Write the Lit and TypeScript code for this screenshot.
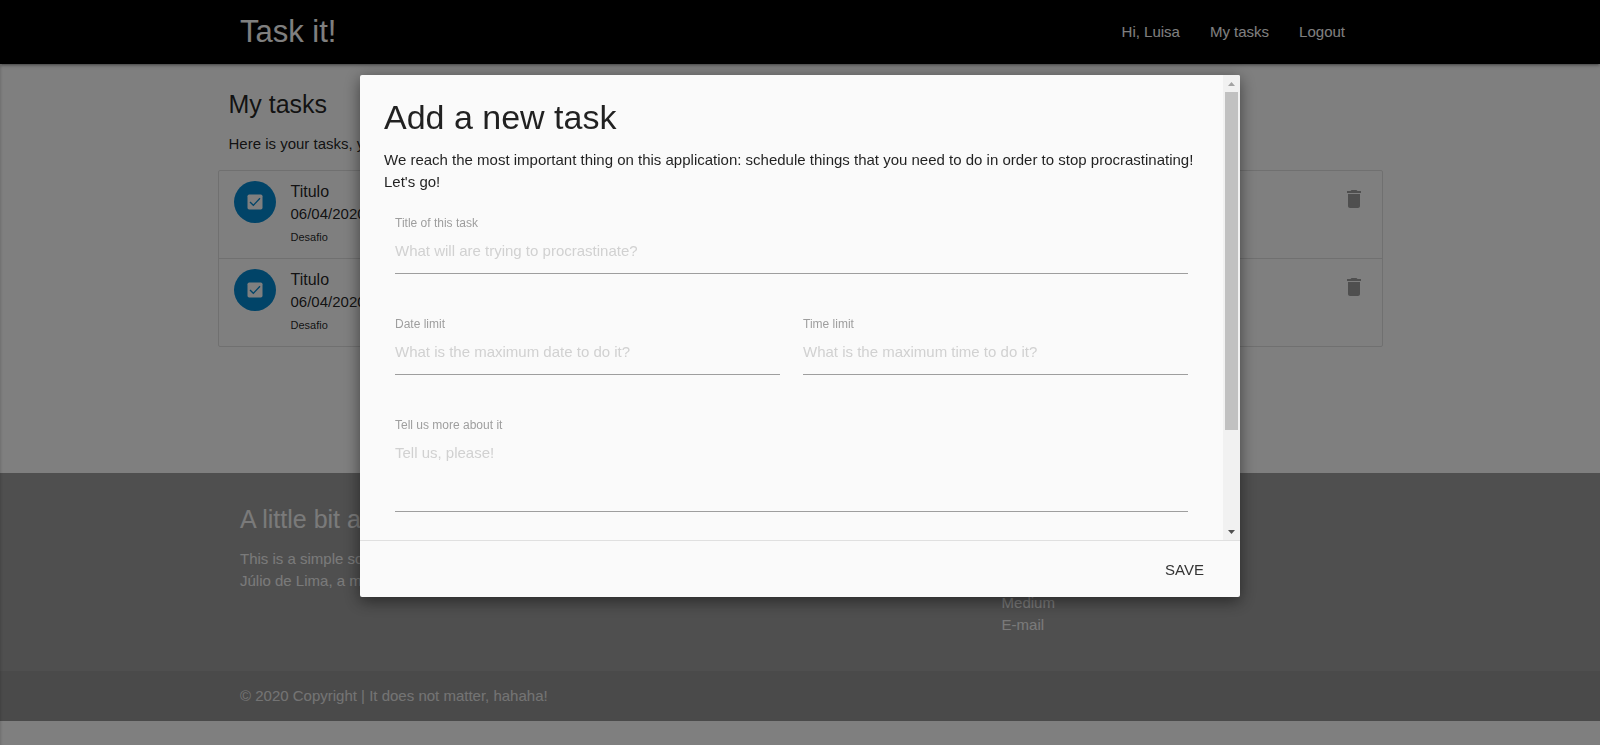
import { LitElement, html, css } from "lit";
import { customElement, property, state } from "lit/decorators.js";

interface Task {
  title: string;
  when: string;
  detail: string;
}

@customElement("task-item")
class TaskItem extends LitElement {
  @property({ attribute: false }) task!: Task;

  static styles = css`
    :host {
      display: flex;
      align-items: flex-start;
      box-sizing: border-box;
      padding: 10px 16px 9px 15px;
      border-bottom: 1px solid #e0e0e0;
    }
    .badge {
      display: flex;
      align-items: center;
      justify-content: center;
      flex: none;
      width: 42px;
      height: 42px;
      margin-right: 15px;
      border-radius: 50%;
      background: #0288d1;
    }
    .badge svg {
      width: 20px;
      height: 20px;
    }
    .text {
      flex: 1;
      line-height: 22px;
    }
    .title {
      font-size: 16px;
    }
    p {
      margin: 0;
    }
    .detail {
      font-size: 11px;
      line-height: 24px;
    }
    button {
      margin: 6px 0 0;
      padding: 0;
      border: 0;
      background: none;
      line-height: 0;
      cursor: pointer;
    }
    button svg {
      width: 24px;
      height: 24px;
      fill: #9e9e9e;
    }
  `;

  render() {
    return html`
      <span class="badge">
        <svg viewBox="0 0 24 24" aria-hidden="true">
          <rect x="3" y="3" width="18" height="18" rx="2" fill="#fff" />
          <path d="M6 12l4 4 8-8.500" fill="none" stroke="#0288d1" stroke-width="1.600" />
        </svg>
      </span>
      <div class="text">
        <div class="title">${this.task.title}</div>
        <p>${this.task.when}</p>
        <p class="detail">${this.task.detail}</p>
      </div>
      <button type="button" aria-label="Delete task">
        <svg viewBox="0 0 24 24" aria-hidden="true">
          <path d="M6 19c0 1.1.9 2 2 2h8c1.1 0 2-.9 2-2V7H6v12zM19 4h-3.5l-1-1h-5l-1 1H5v2h14V4z" />
        </svg>
      </button>
    `;
  }
}

@customElement("task-dialog")
class TaskDialog extends LitElement {
  static styles = css`
    :host {
      position: fixed;
      top: 10%;
      left: 0;
      right: 0;
      display: flex;
      flex-direction: column;
      width: 55%;
      height: calc(70% + 1px);
      margin: 0 auto;
      overflow: hidden;
      border-radius: 2px;
      background: #fafafa;
      box-shadow: 0 4px 16px rgba(0, 0, 0, 0.5);
    }
    .body {
      display: flex;
      flex: 1;
      min-height: 0;
    }
    .content {
      flex: 1;
      padding: 24px;
      overflow-y: auto;
      scrollbar-width: none;
    }
    h4 {
      margin: 0 0 14px;
      font-size: 34px;
      font-weight: 400;
      line-height: 36px;
    }
    p {
      margin: 0;
      line-height: 22px;
    }
    form {
      display: grid;
      grid-template-columns: 1fr 1fr;
      gap: 45px 23px;
      padding: 25px 11px 0;
    }
    .field {
      display: flex;
      flex-direction: column;
    }
    .wide {
      grid-column: 1 / -1;
    }
    label {
      color: #9e9e9e;
      font-size: 12px;
      line-height: 10px;
    }
    input,
    textarea {
      box-sizing: border-box;
      width: 100%;
      height: 46px;
      margin: 0;
      padding: 0;
      border: 0;
      border-bottom: 1px solid #9e9e9e;
      border-radius: 0;
      outline: none;
      background: transparent;
      font: 15px "Liberation Sans", Arial, sans-serif;
    }
    textarea {
      height: 82px;
      padding: 14px 0;
      resize: none;
      overflow: hidden;
    }
    ::placeholder {
      color: #d1d1d1;
      opacity: 1;
    }
    .scrollbar {
      display: flex;
      flex-direction: column;
      width: 17px;
      background: #f1f1f1;
    }
    .scrollbar svg {
      flex: none;
      width: 17px;
      height: 17px;
      fill: #505050;
    }
    .scrollbar .up {
      fill: #a3a3a3;
    }
    .track {
      display: grid;
      grid-template-rows: 29fr 8fr;
      flex: 1;
      padding: 0 2px;
    }
    .thumb {
      background: #c1c1c1;
    }
    footer {
      display: flex;
      align-items: center;
      justify-content: flex-end;
      box-sizing: border-box;
      height: 57px;
      padding: 0 20px;
      border-top: 1px solid rgba(0, 0, 0, 0.1);
    }
    footer button {
      height: 36px;
      padding: 0 16px;
      border: 0;
      background: transparent;
      color: #343434;
      font: 15px "Liberation Sans", Arial, sans-serif;
      text-transform: uppercase;
      cursor: pointer;
    }
  `;

  render() {
    return html`
      <div class="body">
        <div class="content">
          <h4>Add a new task</h4>
          <p>
            We reach the most important thing on this application: schedule things that you need to
            do in order to stop procrastinating! Let's go!
          </p>
          <form id="task-form">
            <div class="field wide">
              <label for="title">Title of this task</label>
              <input id="title" type="text" placeholder="What will are trying to procrastinate?" />
            </div>
            <div class="field">
              <label for="date">Date limit</label>
              <input id="date" type="text" placeholder="What is the maximum date to do it?" />
            </div>
            <div class="field">
              <label for="time">Time limit</label>
              <input id="time" type="text" placeholder="What is the maximum time to do it?" />
            </div>
            <div class="field wide">
              <label for="detail">Tell us more about it</label>
              <textarea id="detail" placeholder="Tell us, please!"></textarea>
            </div>
          </form>
        </div>
        <div class="scrollbar" aria-hidden="true">
          <svg class="up" viewBox="0 0 17 17"><path d="M5 11h7L8.500 7z" /></svg>
          <div class="track"><div class="thumb"></div></div>
          <svg viewBox="0 0 17 17"><path d="M5 7h7L8.500 11z" /></svg>
        </div>
      </div>
      <footer><button type="submit" form="task-form">Save</button></footer>
    `;
  }
}

@customElement("app-root")
class AppRoot extends LitElement {
  @state() private tasks: Task[] = [
    { title: "Titulo", when: "06/04/2020", detail: "Desafio" },
    { title: "Titulo", when: "06/04/2020", detail: "Desafio" },
  ];

  static styles = css`
    :host {
      display: block;
      min-height: 100vh;
      background: #fff;
      color: rgba(0, 0, 0, 0.87);
      font: 15px/22px "Liberation Sans", Arial, sans-serif;
    }
    a {
      color: inherit;
      text-decoration: none;
    }
    .container {
      width: 70%;
      margin: 0 auto;
    }
    .topbar {
      position: relative;
      background: #000;
      color: #fff;
      box-shadow: 0 2px 2px 0 rgba(0, 0, 0, 0.14),
        0 3px 1px -2px rgba(0, 0, 0, 0.12),
        0 1px 5px 0 rgba(0, 0, 0, 0.2);
    }
    .topbar .container {
      display: flex;
      align-items: center;
      justify-content: space-between;
      height: 64px;
    }
    .logo {
      font-size: 31px;
      line-height: 64px;
    }
    nav {
      display: flex;
      gap: 30px;
      padding-right: 15px;
    }
    main {
      width: calc(70% + 45px);
      min-height: 409px;
      margin: 0 auto;
      box-sizing: border-box;
      padding-top: 26px;
    }
    h5 {
      margin: 0 0 15px;
      font-size: 25px;
      font-weight: 400;
      line-height: 28px;
    }
    .intro {
      padding: 0 11px;
    }
    p {
      margin: 0;
    }
    .tasks {
      margin-top: 15px;
      border: 1px solid #e0e0e0;
      border-radius: 2px;
      overflow: hidden;
    }
    .tasks task-item:last-child {
      border-bottom: 0;
    }
    .site-footer {
      background: #9e9e9e;
      color: #f5f5f5;
    }
    .columns {
      display: grid;
      grid-template-columns: 49fr 19fr 32fr;
      box-sizing: border-box;
      min-height: 198px;
      padding-top: 32px;
    }
    .columns .links {
      grid-column: 3;
    }
    ul {
      margin: 0;
      padding: 0;
      list-style: none;
    }
    .copyright {
      background: rgba(51, 51, 51, 0.08);
      color: rgba(255, 255, 255, 0.8);
      line-height: 50px;
    }
    .overlay {
      position: fixed;
      inset: 0;
      background: rgba(0, 0, 0, 0.5);
      box-shadow: inset 3px 0 3px -2px rgba(0, 0, 0, 0.15);
    }
  `;

  render() {
    return html`
      <header class="topbar">
        <div class="container">
          <a class="logo" href="#">Task it!</a>
          <nav>
            <a href="#">Hi, Luisa</a>
            <a href="#">My tasks</a>
            <a href="#">Logout</a>
          </nav>
        </div>
      </header>
      <main>
        <div class="intro">
          <h5>My tasks</h5>
          <p>Here is your tasks, you can add more</p>
        </div>
        <div class="tasks">
          ${this.tasks.map((task) => html`<task-item .task=${task}></task-item>`)}
        </div>
      </main>
      <footer class="site-footer">
        <div class="container columns">
          <section>
            <h5>A little bit about it</h5>
            <p>This is a simple software to manage tasks, created by</p>
            <p>Júlio de Lima, a man who loves software testing.</p>
          </section>
          <section class="links">
            <h5>Links</h5>
            <ul>
              <li><a href="#">LinkedIn</a></li>
              <li><a href="#">GitHub</a></li>
              <li><a href="#">Medium</a></li>
              <li><a href="#">E-mail</a></li>
            </ul>
          </section>
        </div>
        <div class="copyright">
          <div class="container">© 2020 Copyright | It does not matter, hahaha!</div>
        </div>
      </footer>
      <div class="overlay"></div>
      <task-dialog role="dialog" aria-label="Add a new task"></task-dialog>
    `;
  }
}
